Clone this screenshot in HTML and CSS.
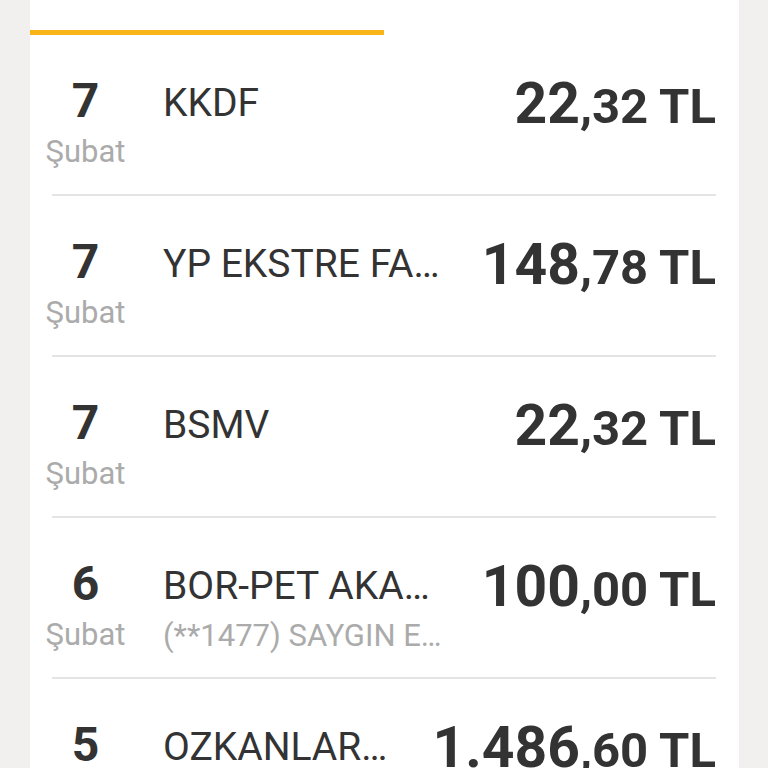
FILE: index.html
```html
<!DOCTYPE html>
<html lang="tr">
<head>
<meta charset="utf-8">
<title>Hesap Hareketleri</title>
<link rel="stylesheet" href="styles.css">
</head>
<body>
<div class="screen">
  <div class="card">
    <div class="tabs"><div class="indicator"></div></div>
    <div class="row">
      <div class="day"><span class="num">7</span><span class="month">Şubat</span></div>
      <div class="info"><span class="title">KKDF</span></div>
      <div class="amount"><span class="int">22</span><span class="dec">,32 TL</span></div>
    </div>
    <div class="divider"></div>
    <div class="row">
      <div class="day"><span class="num">7</span><span class="month">Şubat</span></div>
      <div class="info"><span class="title">YP EKSTRE FA…</span></div>
      <div class="amount"><span class="int">148</span><span class="dec">,78 TL</span></div>
    </div>
    <div class="divider"></div>
    <div class="row">
      <div class="day"><span class="num">7</span><span class="month">Şubat</span></div>
      <div class="info"><span class="title">BSMV</span></div>
      <div class="amount"><span class="int">22</span><span class="dec">,32 TL</span></div>
    </div>
    <div class="divider"></div>
    <div class="row">
      <div class="day"><span class="num">6</span><span class="month">Şubat</span></div>
      <div class="info"><span class="title">BOR-PET AKA…</span><span class="sub">(**1477) SAYGIN E…</span></div>
      <div class="amount"><span class="int">100</span><span class="dec">,00 TL</span></div>
    </div>
    <div class="divider"></div>
    <div class="row">
      <div class="day"><span class="num">5</span><span class="month">Şubat</span></div>
      <div class="info"><span class="title">OZKANLAR…</span></div>
      <div class="amount"><span class="int">1.486</span><span class="dec">,60 TL</span></div>
    </div>
  </div>
</div>
</body>
</html>
```
FILE: styles.css
```css
html, body {
  margin: 0;
  padding: 0;
  background: #f1f0ef;
  overflow: hidden;
}
body {
  font-family: Roboto, "Noto Sans", "Liberation Sans", sans-serif;
  color: #333333;
}
.screen {
  height: 768px;
  overflow: hidden;
  padding: 0 29px 0 30px;
}
.card {
  background: #ffffff;
  min-height: 900px;
}
.tabs {
  height: 35px;
  display: flex;
  align-items: flex-end;
}
.indicator {
  width: 354px;
  height: 5px;
  background: #f9b418;
}
.row {
  height: 159px;
  display: flex;
  align-items: flex-start;
  padding: 0 23px 0 10px;
}
.divider {
  height: 2px;
  margin: 0 23px 0 22px;
  background: #e4e4e4;
}
.day {
  width: 91px;
  flex: none;
  display: flex;
  flex-direction: column;
  align-items: center;
  padding-top: 42px;
}
.num {
  font-size: 48px;
  line-height: 48px;
  font-weight: 700;
  color: #333333;
}
.month {
  font-size: 31px;
  line-height: 54px;
  color: #ababab;
}
.info {
  flex: 1;
  min-width: 0;
  display: flex;
  flex-direction: column;
  padding-top: 44px;
  margin-left: 32px;
}
.title {
  font-size: 39px;
  line-height: 48px;
  white-space: nowrap;
  color: #333333;
}
.sub {
  font-size: 31px;
  line-height: 52px;
  white-space: nowrap;
  color: #ababab;
}
.amount {
  flex: none;
  padding-top: 34px;
  line-height: 70px;
  font-size: 57px;
  font-weight: 700;
  white-space: nowrap;
  color: #333333;
  margin-left: 16px;
}
.int {
  font-size: 57px;
}
.dec {
  font-size: 49px;
}
```
